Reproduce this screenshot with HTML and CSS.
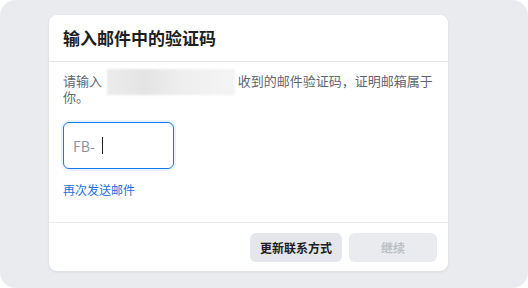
FILE: index.html
```html
<!DOCTYPE html>
<html lang="zh-CN">
  <head>
    <meta charset="UTF-8" />
    <meta name="viewport" content="width=device-width, initial-scale=1.0" />
    <title>输入邮件中的验证码</title>
    <link rel="stylesheet" href="styles.css">
  </head>
  <body>
    <div class="page">
      <div class="dialog">
        <div class="dialog-header">
          <h2>输入邮件中的验证码</h2>
        </div>
        <div class="dialog-body">
          <p class="intro">
            请输入 <span class="masked"></span> 收到的邮件验证码，证明邮箱属于<br />你。
          </p>
          <label class="code-field">
            <span class="prefix">FB-</span>
            <span class="caret"></span>
          </label>
          <a class="resend" href="#">再次发送邮件</a>
        </div>
        <div class="dialog-footer">
          <button class="btn">更新联系方式</button>
          <button class="btn btn-disabled" disabled>继续</button>
        </div>
      </div>
    </div>
  </body>
</html>
```

FILE: styles.css
```css
body {
  margin: 0;
  background-color: #ffffff;
  font-family: "Noto Sans CJK SC", "Noto Sans", sans-serif;
}
.page {
  width: 528px;
  height: 288px;
  box-sizing: border-box;
  background-color: #e9ebee;
  border-radius: 16px;
  padding: 15px 0 0 49px;
}
.dialog {
  width: 399px;
  background-color: #fff;
  border-radius: 8px;
  box-shadow: 0 1px 3px rgba(0, 0, 0, 0.08);
}
.dialog-header {
  height: 44px;
  display: flex;
  align-items: center;
  padding: 0 14px 2px;
  border-bottom: 1px solid #e2e4e8;
}
.dialog-header h2 {
  margin: 0;
  font-size: 17px;
  font-weight: 700;
  color: #1c1e21;
}
.dialog-body {
  padding: 11px 14px 22px;
}
.intro {
  margin: 0;
  font-size: 13px;
  line-height: 16px;
  color: #606770;
}
.masked {
  position: relative;
  display: inline-block;
  width: 128px;
  height: 16px;
  margin-left: 2px;
  vertical-align: top;
}
/* blurred address sits over the line */
.masked::before {
  content: "";
  position: absolute;
  top: -4px;
  bottom: -6px;
  left: 0;
  right: 0;
  background: linear-gradient(90deg, #ececec 0%, #e4e4e4 30%, #efefef 60%, #f4f4f4 100%);
  filter: blur(1px);
}
.code-field {
  display: flex;
  align-items: center;
  width: 111px;
  height: 47px;
  box-sizing: border-box;
  margin-top: 17px;
  padding: 0 9px;
  border: 1px solid #1877f2;
  border-radius: 6px;
  box-shadow: 0 0 0 2px #e7f3ff;
}
.prefix {
  font-size: 14px;
  color: #8d949e;
}
.caret {
  width: 1px;
  height: 17px;
  margin-left: 7px;
  background-color: #1c1e21;
}
.resend {
  display: inline-block;
  margin-top: 12px;
  font-size: 12px;
  color: #216fdb;
  text-decoration: none;
}
.dialog-footer {
  display: flex;
  justify-content: flex-end;
  gap: 7px;
  padding: 10px 11px 9px;
  border-top: 1px solid #e9ebee;
}
.btn {
  height: 29px;
  padding: 0 10px;
  border: none;
  border-radius: 6px;
  background-color: #e4e6eb;
  font-family: inherit;
  font-size: 12px;
  font-weight: 700;
  color: #1c1e21;
}
.btn-disabled {
  width: 88px;
  background-color: #e9ebee;
  color: #bcc0c4;
}
```
